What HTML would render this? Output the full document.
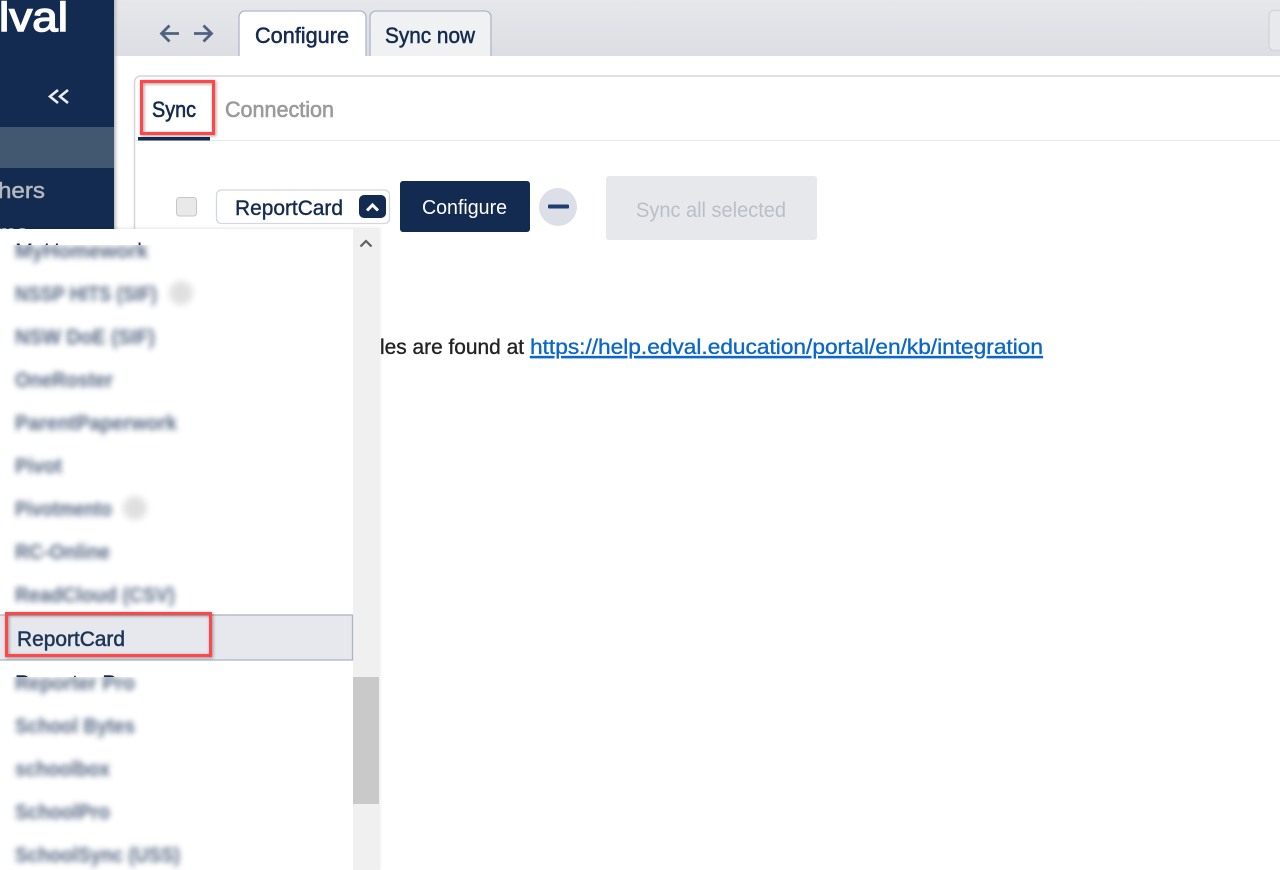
<!DOCTYPE html>
<html lang="en">
<head>
<meta charset="utf-8">
<title>Configure</title>
<style>
html,body{margin:0;padding:0;width:1280px;height:870px;overflow:hidden;background:#fff}
svg{display:block}
text{font-family:"Liberation Sans",sans-serif;paint-order:stroke}
</style>
</head>
<body>
<svg width="1280" height="870" viewBox="0 0 1280 870" xmlns="http://www.w3.org/2000/svg">
<defs>
<linearGradient id="top" x1="0" y1="0" x2="0" y2="1"><stop offset="0" stop-color="#e6e7eb"/><stop offset="1" stop-color="#dcdee3"/></linearGradient>
<linearGradient id="side" x1="0" y1="0" x2="1" y2="0"><stop offset="0" stop-color="#8a8f96"/><stop offset="1" stop-color="#ffffff" stop-opacity="0"/></linearGradient>
<filter id="bl" x="-10%" y="-60%" width="120%" height="220%"><feGaussianBlur stdDeviation="2.8"/></filter>
<filter id="bc" x="-60%" y="-60%" width="220%" height="220%"><feGaussianBlur stdDeviation="3.5"/></filter>
<filter id="sh" x="-10%" y="-20%" width="120%" height="140%"><feDropShadow dx="1" dy="1" stdDeviation="1.6" flood-color="#000" flood-opacity=".4"/></filter>
<filter id="ds" x="-5%" y="-5%" width="110%" height="110%"><feDropShadow dx="0" dy="-1" stdDeviation="1.5" flood-color="#000" flood-opacity=".1"/></filter>
<clipPath id="belowA"><rect x="7" y="245" width="220" height="40"/></clipPath>
<clipPath id="aboveA"><rect x="7" y="230" width="220" height="15"/></clipPath>
<clipPath id="belowB"><rect x="7" y="677" width="220" height="40"/></clipPath>
<clipPath id="aboveB"><rect x="7" y="660" width="220" height="17"/></clipPath>
</defs>

<!-- top bar -->
<rect x="115" y="0" width="1165" height="56" fill="url(#top)"/>
<rect x="1269" y="10.5" width="30" height="40" rx="5" fill="#e8e9ed" stroke="#d3d6dd" stroke-width="1.5"/>

<!-- nav arrows -->
<g fill="none" stroke="#4f6280" stroke-width="2.8">
<path d="M179 33.5H162M169.500 25.500L161.500 33.500L169.500 41.500"/>
<path d="M194 33.5H211.500M203.500 25.500L211.500 33.500L203.500 41.500"/>
</g>

<!-- tabs -->
<path d="M239 56V17a6 6 0 0 1 6-6H360a6 6 0 0 1 6 6V56" fill="#fff" stroke="#aeb6ca" stroke-width="1.300"/>
<path d="M370 56V17a6 6 0 0 1 6-6H485a6 6 0 0 1 6 6V56" fill="#eff1f2" stroke="#aeb6ca" stroke-width="1.300"/>
<text x="255" y="43" font-size="22" fill="#142b4f" stroke="#142b4f" stroke-width=".5" textLength="94" lengthAdjust="spacingAndGlyphs">Configure</text>
<text x="385" y="43" font-size="22" fill="#142b4f" stroke="#142b4f" stroke-width=".5" textLength="90" lengthAdjust="spacingAndGlyphs">Sync now</text>

<!-- panel -->
<path d="M134.500 870V82a6 6 0 0 1 6-6H1280" fill="none" stroke="#d3d6de" stroke-width="1.500"/>
<rect x="135" y="140" width="1145" height="1" fill="#e5e7eb"/>
<rect x="138" y="137" width="72" height="3.500" fill="#132b50"/>
<text x="152" y="117" font-size="22" fill="#142b4f" stroke="#142b4f" stroke-width=".6" textLength="44" lengthAdjust="spacingAndGlyphs">Sync</text>
<text x="225" y="117" font-size="22" fill="#9a9a9a" stroke="#9a9a9a" stroke-width=".6" textLength="109" lengthAdjust="spacingAndGlyphs">Connection</text>
<rect x="141.500" y="81.500" width="72" height="52" fill="none" stroke="#ff4646" stroke-width="3" filter="url(#sh)"/>

<!-- controls -->
<rect x="176.500" y="197.500" width="20" height="18.500" rx="3" fill="#e9e9e9" stroke="#c6c6c6"/>
<rect x="216.500" y="190" width="173" height="33.500" rx="5" fill="#fff" stroke="#d3d7e0" stroke-width="1.300"/>
<text x="235" y="215" font-size="21.500" fill="#142b4f" stroke="#142b4f" stroke-width=".4" textLength="108" lengthAdjust="spacingAndGlyphs">ReportCard</text>
<rect x="359" y="195" width="27" height="23" rx="5" fill="#132b50"/>
<path d="M367 210.500L372.500 205L378 210.500" fill="none" stroke="#fff" stroke-width="3"/>
<rect x="400" y="181" width="130" height="51" rx="3" fill="#132b50"/>
<text x="422" y="214" font-size="20.500" fill="#fff" textLength="85" lengthAdjust="spacingAndGlyphs">Configure</text>
<circle cx="558" cy="207" r="19" fill="#dcdfe7"/>
<rect x="548" y="204.500" width="21" height="4" rx="1" fill="#1e3d72"/>
<rect x="606" y="176" width="211" height="64" rx="3" fill="#e6e8ec"/>
<text x="636" y="217" font-size="21.500" fill="#b9bfc9" textLength="150" lengthAdjust="spacingAndGlyphs">Sync all selected</text>

<!-- help text -->
<text x="380" y="354" font-size="21.500" fill="#222" stroke="#222" stroke-width=".35" textLength="144" lengthAdjust="spacingAndGlyphs">les are found at</text>
<text x="530" y="354" font-size="21.500" fill="#0a66c8" stroke="#0a66c8" stroke-width=".35" text-decoration="underline" textLength="513" lengthAdjust="spacingAndGlyphs">https://help.edval.education/portal/en/kb/integration</text>

<!-- sidebar -->
<rect x="114" y="0" width="6" height="229" fill="url(#side)" opacity=".65"/>
<rect x="0" y="0" width="114" height="230" fill="#132b50"/>
<text x="-1" y="31" font-size="41" fill="#fff" stroke="#fff" stroke-width="1.400" textLength="69" lengthAdjust="spacingAndGlyphs">lval</text>
<path d="M58 90L50 96.500L58 103M68 90L60 96.500L68 103" fill="none" stroke="#e9ecf0" stroke-width="2.600"/>
<rect x="0" y="127" width="114" height="41" fill="#425770"/>
<text x="-2" y="198" font-size="22" fill="#b4b8bf" stroke="#b4b8bf" stroke-width=".5" textLength="47" lengthAdjust="spacingAndGlyphs">hers</text>
<text x="-3" y="240" font-size="22" fill="#b4b8bf" textLength="31" lengthAdjust="spacingAndGlyphs">ms</text>

<!-- dropdown -->
<rect x="0" y="229" width="380" height="641" fill="#fff" filter="url(#ds)"/>
<rect x="353" y="229" width="27" height="641" fill="#f0f0f0"/>
<rect x="353" y="677" width="26" height="127" fill="#c9c9c9"/>
<path d="M360.500 246.500L366 241L371.500 246.500" fill="none" stroke="#606060" stroke-width="2.200"/>

<!-- sharp tops of clipped items -->
<g font-size="21" fill="#142b4f">
<text x="15" y="258" clip-path="url(#aboveA)" textLength="133" lengthAdjust="spacingAndGlyphs">MyHomework</text>
<text x="15" y="690" clip-path="url(#aboveB)" stroke="#142b4f" stroke-width=".4" textLength="120" lengthAdjust="spacingAndGlyphs">Reporter Pro</text>
</g>

<!-- blurred items -->
<g font-size="21" font-weight="700" fill="#2a3f63" opacity=".8">
<g clip-path="url(#belowA)"><text x="15" y="258" filter="url(#bl)" textLength="133" lengthAdjust="spacingAndGlyphs">MyHomework</text></g>
<text x="15" y="301" filter="url(#bl)" textLength="142" lengthAdjust="spacingAndGlyphs">NSSP HITS (SIF)</text>
<text x="15" y="344" filter="url(#bl)" textLength="140" lengthAdjust="spacingAndGlyphs">NSW DoE (SIF)</text>
<text x="15" y="387" filter="url(#bl)" textLength="98" lengthAdjust="spacingAndGlyphs">OneRoster</text>
<text x="15" y="430" filter="url(#bl)" textLength="162" lengthAdjust="spacingAndGlyphs">ParentPaperwork</text>
<text x="15" y="473" filter="url(#bl)" textLength="47" lengthAdjust="spacingAndGlyphs">Pivot</text>
<text x="15" y="516" filter="url(#bl)" textLength="97" lengthAdjust="spacingAndGlyphs">Pivotmento</text>
<text x="15" y="559" filter="url(#bl)" textLength="95" lengthAdjust="spacingAndGlyphs">RC-Online</text>
<text x="15" y="602" filter="url(#bl)" textLength="160" lengthAdjust="spacingAndGlyphs">ReadCloud (CSV)</text>
<g clip-path="url(#belowB)"><text x="15" y="690" filter="url(#bl)" textLength="120" lengthAdjust="spacingAndGlyphs">Reporter Pro</text></g>
<text x="15" y="733" filter="url(#bl)" textLength="120" lengthAdjust="spacingAndGlyphs">School Bytes</text>
<text x="15" y="776" filter="url(#bl)" textLength="95" lengthAdjust="spacingAndGlyphs">schoolbox</text>
<text x="15" y="819" filter="url(#bl)" textLength="95" lengthAdjust="spacingAndGlyphs">SchoolPro</text>
<text x="15" y="862" filter="url(#bl)" textLength="165" lengthAdjust="spacingAndGlyphs">SchoolSync (USS)</text>
</g>
<circle cx="181" cy="293" r="12" fill="#e0e0e0" filter="url(#bc)"/>
<circle cx="135" cy="508" r="12" fill="#e0e0e0" filter="url(#bc)"/>

<!-- selected row -->
<rect x="-2" y="615" width="354.500" height="45" fill="#e6e8ed" stroke="#aeb4c6" stroke-width="1.300"/>
<text x="17" y="646" font-size="21" fill="#1d3557" stroke="#1d3557" stroke-width=".5" textLength="108" lengthAdjust="spacingAndGlyphs">ReportCard</text>
<rect x="6.500" y="613.500" width="204" height="42" fill="none" stroke="#ff4646" stroke-width="3" filter="url(#sh)"/>
</svg>
</body>
</html>
